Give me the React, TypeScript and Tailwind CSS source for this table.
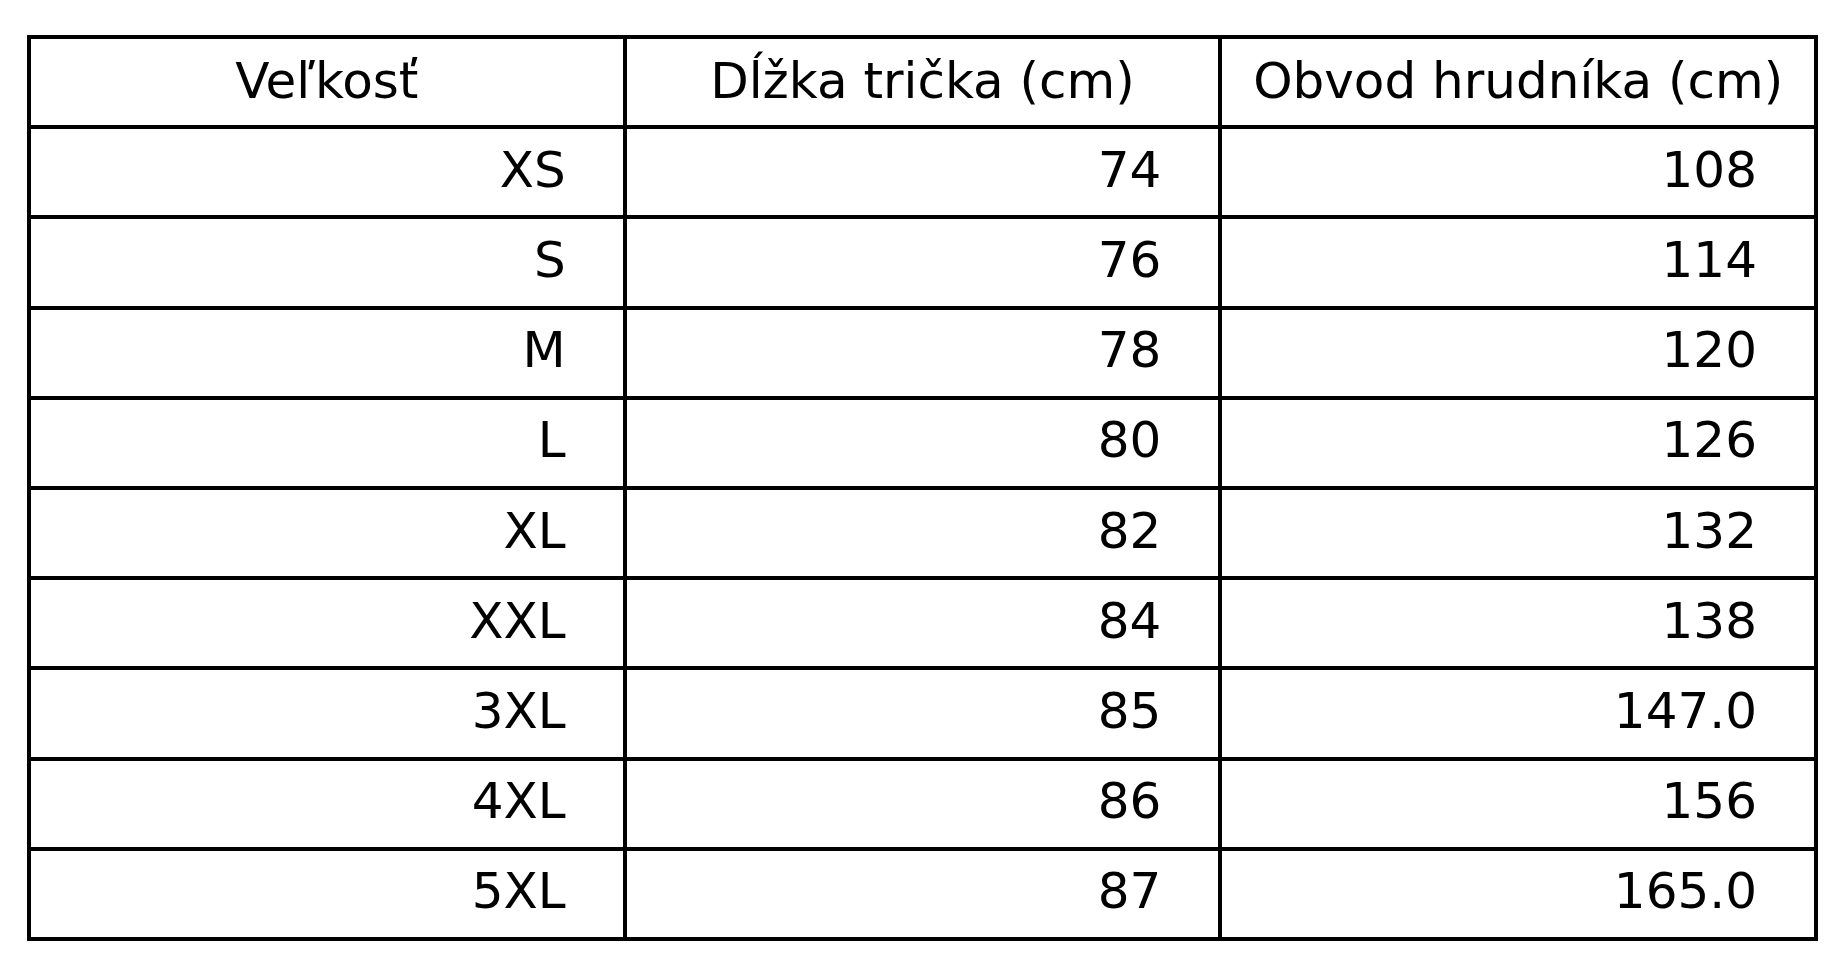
const headers = ['Veľkosť', 'Dĺžka trička (cm)', 'Obvod hrudníka (cm)'];

const rows: [string, string, string][] = [
    ['XS', '74', '108'],
    ['S', '76', '114'],
    ['M', '78', '120'],
    ['L', '80', '126'],
    ['XL', '82', '132'],
    ['XXL', '84', '138'],
    ['3XL', '85', '147.0'],
    ['4XL', '86', '156'],
    ['5XL', '87', '165.0'],
];

export default function App() {
    return (
        <main className="min-h-screen w-full bg-white pl-[27px] pt-[35px] font-['DejaVu_Sans',sans-serif] text-black">
            <div className="w-[1791px] bg-black p-[4px]">
                <div className="grid grid-cols-3 gap-[4px]">
                    {headers.map((h) => (
                        <div
                            key={h}
                            className="flex h-[86.2px] items-center justify-center bg-white pb-[3px] text-[50px] leading-none whitespace-nowrap"
                        >
                            {h}
                        </div>
                    ))}
                    {rows.map((row) =>
                        row.map((cell, i) => (
                            <div
                                key={row[0] + i}
                                className="flex h-[86.2px] items-center justify-end bg-white pr-[57px] pb-[5px] text-[50px] leading-none whitespace-nowrap"
                            >
                                {cell}
                            </div>
                        ))
                    )}
                </div>
            </div>
        </main>
    );
}
